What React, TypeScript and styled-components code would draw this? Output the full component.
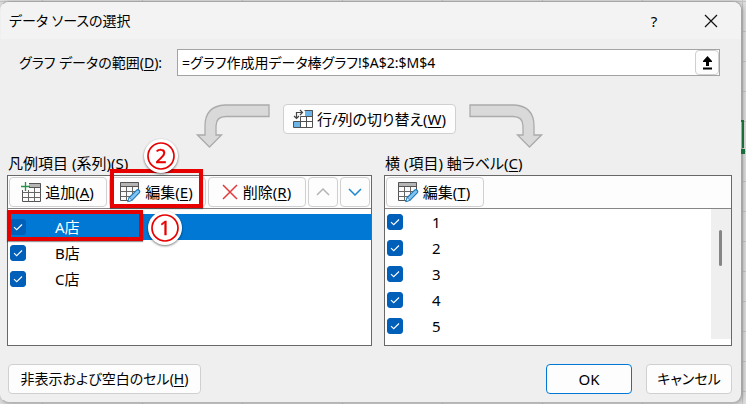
import React, { useState } from "react";
import styled, { createGlobalStyle } from "styled-components";

const GlobalStyle = createGlobalStyle`
  * { box-sizing: border-box; }
  html, body, #root { height: 100%; }
  body {
    margin: 0;
    color: #000;
    font-family: "Noto Sans", "Noto Sans CJK JP", sans-serif;
    font-size: 15px;
    line-height: 20px;
    font-feature-settings: "palt";
  }
  button, input { font: inherit; color: inherit; font-feature-settings: inherit; }
  u { text-underline-offset: 2px; text-decoration-thickness: 1px; }
`;

const Sheet = styled.div`
  min-height: 100%;
  padding: 1px 4px 1px 0;
  display: flex;
  overflow: hidden;
  position: relative;
  background:
    repeating-linear-gradient(to right, transparent 0 42px, #c4c4c4 42px 43px, transparent 43px 100px),
    repeating-linear-gradient(to bottom, transparent 0 1px, #c4c4c4 1px 2px, transparent 2px 30px),
    #dcdcdc;
`;

const CellSelection = styled.div`
  position: absolute;
  z-index: 1;
  right: 2px;
  top: 120px;
  width: 3px;
  height: 28px;
  border-top: 2px solid #1a6e3c;
  border-right: 2px solid #1a6e3c;

  &::after {
    content: "";
    position: absolute;
    right: -3px;
    top: 27px;
    width: 4px;
    height: 5px;
    background: #1a6e3c;
  }
`;

const Dialog = styled.section`
  position: relative;
  flex: 1;
  display: flex;
  flex-direction: column;
  border: 1px solid #a6a6a6;
  border-left-color: #efefef;
  border-bottom-color: #b4b4b4;
  border-radius: 9px;
  background: #efefef;
  box-shadow: 1px 1px 4px #0004;
  overflow: hidden;
`;

const TitleBar = styled.header`
  height: 37px;
  padding: 0 14px 0 8px;
  display: flex;
  align-items: center;
  background: #f3f3f3;
`;

const Title = styled.h1`
  flex: 1;
  margin: 0;
  font-size: 14px;
  font-weight: 400;
`;

const TitleButton = styled.button`
  width: 32px;
  height: 32px;
  margin-left: 25px;
  padding: 0;
  display: grid;
  place-items: center;
  border: 0;
  background: none;
`;

const Body = styled.main`
  padding: 10px 9px 8px 6px;
  display: flex;
  flex-direction: column;
  flex: 1;
`;

const RangeRow = styled.div`
  display: flex;
  align-items: center;
  padding: 0 12px;
  font-size: 14px;
`;

const RangeLabel = styled.label`
  width: 158px;
  white-space: nowrap;
`;

const RangeField = styled.div`
  flex: 1;
  height: 27px;
  display: flex;
  border: 1px solid #a3a3a3;
  background: #fff;
`;

const RangeInput = styled.input`
  flex: 1;
  min-width: 0;
  padding: 0 4px;
  border: 0;
  outline: 0;
  background: none;
`;

const CollapseButton = styled.button`
  width: 24px;
  padding: 0;
  display: grid;
  place-items: center;
  border: 1px solid #cfcfcf;
  border-radius: 4px;
  background: #fdfdfd;
`;

const SwitchRow = styled.div`
  display: flex;
  justify-content: center;
  gap: 13px;
  height: 46px;
  margin: 28px 0 3px;
`;

const Button = styled.button<{ $width: number; $primary?: boolean; $small?: boolean }>`
  position: relative;
  width: ${(p) => p.$width}px;
  height: 30px;
  padding: 0;
  display: flex;
  align-items: center;
  justify-content: center;
  gap: 3px;
  font-size: ${(p) => (p.$small ? "14px" : "15px")};
  white-space: nowrap;
  border: 1px solid ${(p) => (p.$primary ? "#0078d4" : "#d0d0d0")};
  border-radius: 4px;
  background: #fdfdfd;
`;

const ToolButton = styled(Button)`
  padding-right: 2px;
  gap: 4px;
`;

const Panels = styled.div`
  display: grid;
  grid-template-columns: 365fr 349fr;
  gap: 12px;
`;

const PanelTitle = styled.h2`
  margin: 0 0 2px;
  padding-left: 1px;
  font-size: 15px;
  line-height: 20px;
  font-weight: 400;
`;

const PanelBox = styled.div`
  height: 171px;
  display: flex;
  flex-direction: column;
  border: 1px solid #686868;
  background: #fff;
`;

const Toolbar = styled.div`
  height: 33px;
  padding: 1px;
  display: flex;
  gap: 2px;
  border-bottom: 1px solid #868686;
  background: #fdfdfd;
`;

const ListArea = styled.div`
  flex: 1;
  min-height: 0;
  display: flex;
`;

const List = styled.ul<{ $inset?: boolean }>`
  flex: 1;
  margin: 0;
  padding: ${(p) => (p.$inset ? "5px" : "0")} 0 0;
  list-style: none;
`;

const Row = styled.li<{ $selected?: boolean }>`
  position: relative;
  height: 26px;
  color: ${(p) => (p.$selected ? "#fff" : "#000")};
  background: ${(p) => (p.$selected ? "#0078d4" : "transparent")};
`;

const RowLabel = styled.label`
  height: 100%;
  padding-left: 2px;
  display: flex;
  align-items: center;
  gap: 29px;
`;

const CheckSlot = styled.span`
  display: grid;
  width: 16px;
  height: 16px;

  > * { grid-area: 1 / 1; }
  svg { pointer-events: none; }
`;

const CheckInput = styled.input`
  appearance: none;
  width: 16px;
  height: 16px;
  margin: 0;
  border: 1px solid #005fb8;
  border-radius: 3px;
  &:checked { background: #005fb8; }
`;

const ScrollTrack = styled.div`
  width: 20px;
  height: 130px;
  padding: 21px 0 0 8px;
  background: #efefef;
`;

const ScrollThumb = styled.div`
  width: 3px;
  height: 36px;
  border-radius: 2px;
  background: #858585;
`;

const Footer = styled.footer`
  display: flex;
  gap: 14px;
  margin-top: 18px;
  padding-left: 1px;
`;

const Spacer = styled.div`
  flex: 1;
`;

const Frame = styled.span<{ $kind: "row" | "button" }>`
  position: absolute;
  z-index: 1;
  left: ${(p) => (p.$kind === "row" ? "-1px" : "0")};
  top: ${(p) => (p.$kind === "row" ? "-4px" : "-9px")};
  width: ${(p) => (p.$kind === "row" ? "136px" : "93px")};
  height: ${(p) => (p.$kind === "row" ? "31px" : "39px")};
  border: 4px solid #e60000;
  box-shadow: 0 1px 1px #0006;
  pointer-events: none;
`;

const Badge = styled.svg<{ $kind: "row" | "button" }>`
  position: absolute;
  z-index: 2;
  left: ${(p) => (p.$kind === "row" ? "137px" : "31px")};
  top: ${(p) => (p.$kind === "row" ? "-6px" : "-42px")};
  width: 40px;
  height: 40px;
  filter: drop-shadow(0 1px 1px #0008);
  pointer-events: none;
`;

const Callout = ({ kind, digit }: { kind: "row" | "button"; digit: string }) => (
  <>
    <Frame $kind={kind} />
    <Badge $kind={kind} viewBox="0 0 40 40">
      <circle cx="20" cy="20" r="17" fill="#fff" />
      <circle cx="20" cy="20" r="13" fill="none" stroke="#e60000" strokeWidth="1.7" />
      <text x="20" y="27" textAnchor="middle" fontSize="20" fill="#e60000" stroke="#e60000" strokeWidth="0.4">
        {digit}
      </text>
    </Badge>
  </>
);

const CheckBox = ({ id, onSelect }: { id: string; onSelect?: () => void }) => {
  const [checked, setChecked] = useState(true);
  return (
    <CheckSlot>
      <CheckInput
        id={id}
        type="checkbox"
        checked={checked}
        onChange={() => {
          setChecked(!checked);
          onSelect?.();
        }}
      />
      {checked && (
        <svg width="16" height="16" viewBox="0 0 16 16" fill="none" stroke="#fff" strokeWidth="1.1" aria-hidden>
          <path d="M4 8.2 6.7 10.7 12 5.5" />
        </svg>
      )}
    </CheckSlot>
  );
};

const TableGrid = () => (
  <>
    <path d="M3.5 3.500h18v18h-18z" fill="#fafafa" stroke="#555" />
    <path d="M3.5 12.5h18M3.5 17.5h18M9.5 7v14.5M15.5 7v14.5" fill="none" stroke="#666" />
    <path d="M3 3h19v4H3z" fill="#b5b5b5" />
    <path d="M3.5 3.5h18v4h-18z" fill="none" stroke="#555" />
  </>
);

const AddIcon = () => (
  <svg width="21" height="22" viewBox="0 0 21 22" aria-hidden>
    <g transform="translate(-1 -1)">
      <TableGrid />
    </g>
    <path d="M0 0h9v9H0z" fill="#fdfdfd" />
    <path d="M5.5 1v9M1 5.5h9" stroke="#249447" strokeWidth="1.3" />
  </svg>
);

const EditIcon = () => (
  <svg width="21" height="22" viewBox="0 0 21 22" aria-hidden>
    <g transform="translate(-3 -2)">
      <TableGrid />
    </g>
    <path d="M21 8v14H7z" fill="#fdfdfd" />
    <path d="m8 20.5 1.2-4 7.2-7.2q1.6-1.3 2.8 0t0 2.7L12 19.3z" fill="#83c4ee" stroke="#1976b8" strokeWidth="1.1" />
    <path d="m8 20.5 1.2-4 2.7 2.8z" fill="#fff" stroke="#1976b8" strokeWidth="0.8" />
  </svg>
);

const SwitchIcon = () => (
  <svg width="21" height="20" viewBox="0 0 21 20" aria-hidden>
    <path d="M8.5 1.5h11v17h-19v-8h8z" fill="#fff" />
    <path d="M12 1h8v6h-8zM1 12h7v7H1z" fill="#69b5e8" />
    <path d="M11.5 1.5h8v17h-19v-6M.5 12.5h19M7.5 7.5h12M7.5 7.5v11M13.5 7v12" fill="none" stroke="#505050" />
    <path d="M3.5 9V3.5H9M7 1l2.5 2.5L7 6M1 7l2.5 2.5L6 7" fill="none" stroke="#444" strokeWidth="1.2" />
  </svg>
);

const CurvedArrow = ({ flip }: { flip?: boolean }) => (
  <svg width="74" height="46" viewBox="0 0 74 46" aria-hidden>
    <path
      transform={flip ? "translate(74 0) scale(-1 1)" : undefined}
      d="M73 1H29Q9 2 9 22v9H1.5L13.5 43 25.5 31H20v-9Q20 12.500 30 12.500H73z"
      fill="#d9d9d9"
      stroke="#ababab"
      strokeWidth="1.3"
    />
  </svg>
);

const categories = ["1", "2", "3", "4", "5"];
const stores = ["A店", "B店", "C店"];

export default function App() {
  const [range, setRange] = useState("=グラフ作成用データ棒グラフ!$A$2:$M$4");
  const [selected, setSelected] = useState(0);

  return (
    <>
      <GlobalStyle />
      <Sheet>
        <CellSelection />
        <Dialog role="dialog" aria-labelledby="dialog-title">
          <TitleBar>
            <Title id="dialog-title">データ ソースの選択</Title>
            <TitleButton aria-label="ヘルプ">?</TitleButton>
            <TitleButton aria-label="閉じる">
              <svg width="14" height="14" viewBox="0 0 14 14" stroke="#111" strokeWidth="1.2" aria-hidden>
                <path d="m1 1 12 12M13 1 1 13" />
              </svg>
            </TitleButton>
          </TitleBar>
          <Body>
            <RangeRow>
              <RangeLabel htmlFor="range">
                グラフ データの範囲(<u>D</u>):
              </RangeLabel>
              <RangeField>
                <RangeInput id="range" value={range} onChange={(e) => setRange(e.target.value)} />
                <CollapseButton aria-label="範囲を選択">
                  <svg width="11" height="14" viewBox="0 0 11 14" aria-hidden>
                    <path d="M5.5 0 10 5v1H7v4H4V6H1V5zM1 11.5h9v2H1z" fill="#000" />
                  </svg>
                </CollapseButton>
              </RangeField>
            </RangeRow>
            <SwitchRow>
              <CurvedArrow />
              <Button $width={173}>
                <SwitchIcon />
                <span>
                  行/列の切り替え(<u>W</u>)
                </span>
              </Button>
              <CurvedArrow flip />
            </SwitchRow>
            <Panels>
              <section>
                <PanelTitle>
                  凡例項目 (系列)(<u>S</u>)
                </PanelTitle>
                <PanelBox>
                  <Toolbar>
                    <ToolButton $width={98}>
                      <AddIcon />
                      <span>
                        追加(<u>A</u>)
                      </span>
                    </ToolButton>
                    <ToolButton $width={97}>
                      <EditIcon />
                      <span>
                        編集(<u>E</u>)
                      </span>
                      <Callout kind="button" digit="2" />
                    </ToolButton>
                    <ToolButton $width={98}>
                      <svg width="18" height="18" viewBox="0 0 18 18" stroke="#e33b3b" strokeWidth="1.5" aria-hidden>
                        <path d="m2 2 14 14M16 2 2 16" />
                      </svg>
                      <span>
                        削除(<u>R</u>)
                      </span>
                    </ToolButton>
                    <Button $width={30} aria-label="上へ移動">
                      <svg width="14" height="8" viewBox="0 0 14 8" fill="none" stroke="#b5b5b5" strokeWidth="1.5" aria-hidden>
                        <path d="m1 7 6-6 6 6" />
                      </svg>
                    </Button>
                    <Button $width={30} aria-label="下へ移動">
                      <svg width="14" height="8" viewBox="0 0 14 8" fill="none" stroke="#1e88cf" strokeWidth="1.5" aria-hidden>
                        <path d="m1 1 6 6 6-6" />
                      </svg>
                    </Button>
                  </Toolbar>
                  <ListArea>
                    <List $inset>
                      {stores.map((name, i) => (
                        <Row key={name} $selected={i === selected}>
                          <RowLabel htmlFor={`series-${i}`}>
                            <CheckBox id={`series-${i}`} onSelect={() => setSelected(i)} />
                            {name}
                          </RowLabel>
                          {i === 0 && <Callout kind="row" digit="1" />}
                        </Row>
                      ))}
                    </List>
                  </ListArea>
                </PanelBox>
              </section>
              <section>
                <PanelTitle>
                  横 (項目) 軸ラベル(<u>C</u>)
                </PanelTitle>
                <PanelBox>
                  <Toolbar>
                    <ToolButton $width={98}>
                      <EditIcon />
                      <span>
                        編集(<u>T</u>)
                      </span>
                    </ToolButton>
                  </Toolbar>
                  <ListArea>
                    <List>
                      {categories.map((name, i) => (
                        <Row key={name}>
                          <RowLabel htmlFor={`category-${i}`}>
                            <CheckBox id={`category-${i}`} />
                            {name}
                          </RowLabel>
                        </Row>
                      ))}
                    </List>
                    <ScrollTrack>
                      <ScrollThumb />
                    </ScrollTrack>
                  </ListArea>
                </PanelBox>
              </section>
            </Panels>
            <Footer>
              <Button $width={193} $small>
                <span>
                  非表示および空白のセル(<u>H</u>)
                </span>
              </Button>
              <Spacer />
              <Button $width={86} $primary>
                OK
              </Button>
              <Button $width={86} $small>
                キャンセル
              </Button>
            </Footer>
          </Body>
        </Dialog>
      </Sheet>
    </>
  );
}
